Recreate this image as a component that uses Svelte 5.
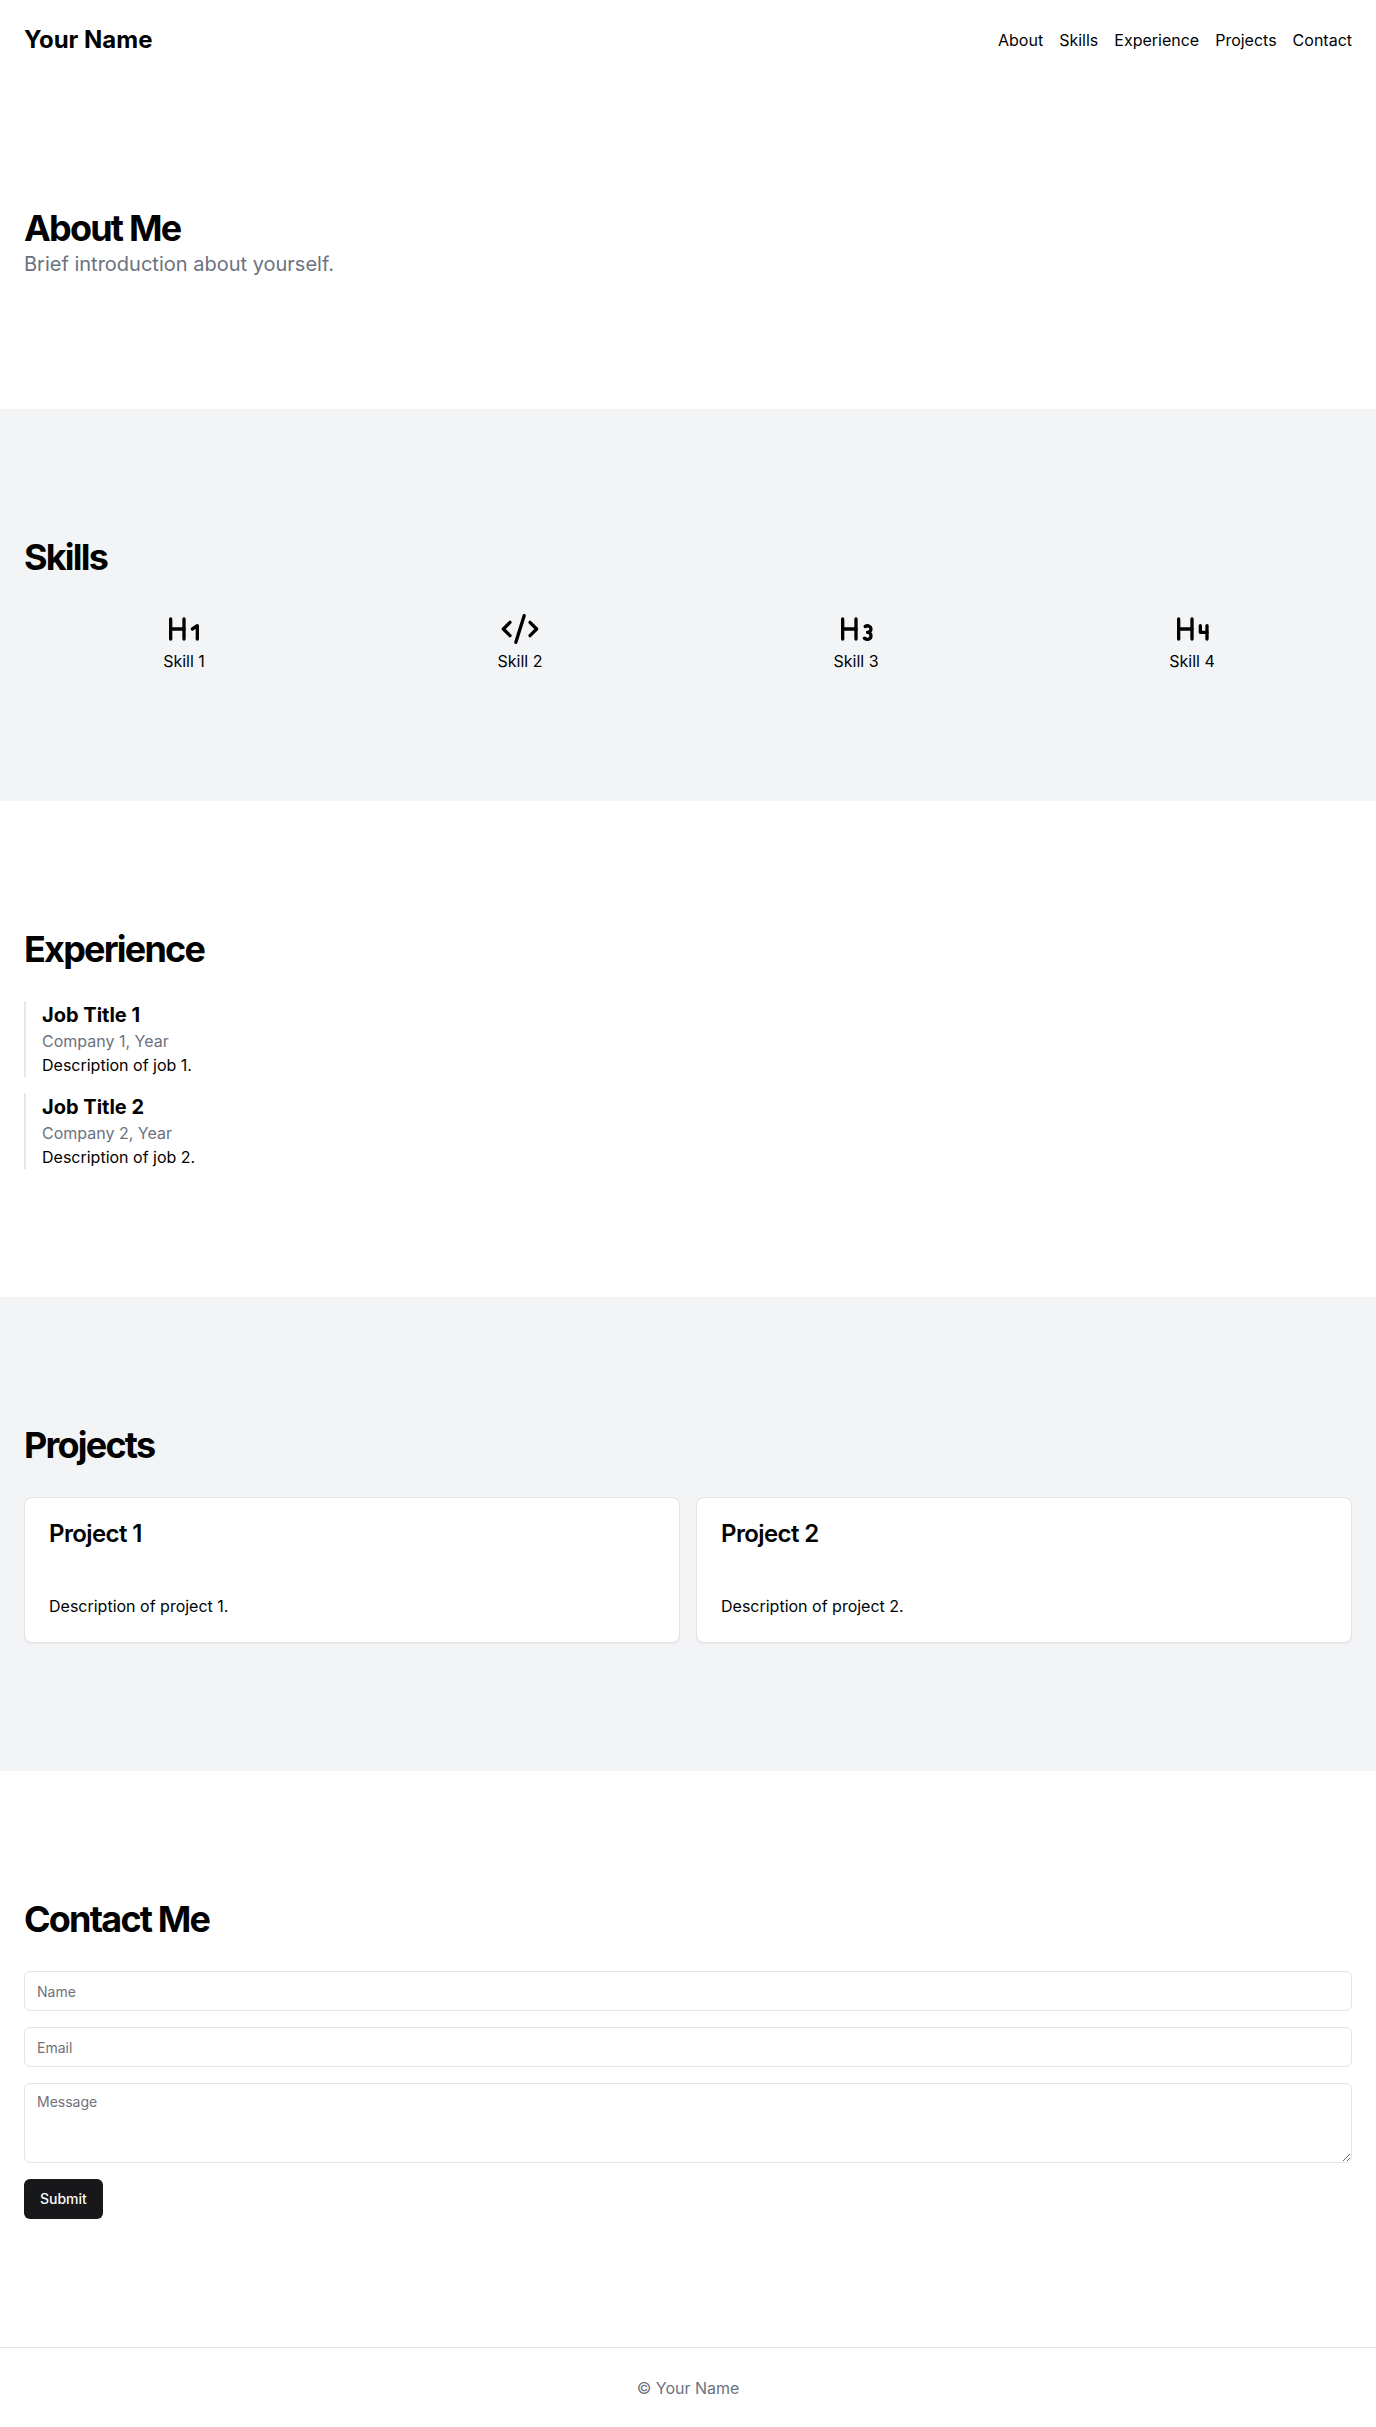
<script>
  const links = ['About', 'Skills', 'Experience', 'Projects', 'Contact'];
  const skills = [
    { name: 'Skill 1', paths: ['M4 12h8', 'M4 18V6', 'M12 18V6', 'm17 12 3-2v8'] },
    { name: 'Skill 2', paths: ['m18 16 4-4-4-4', 'm6 8-4 4 4 4', 'm14.5 4-5 16'] },
    { name: 'Skill 3', paths: ['M4 12h8', 'M4 18V6', 'M12 18V6', 'M17.5 10.5c1.7-1 3.5 0 3.5 1.5a2 2 0 0 1-2 2', 'M17 17.5c2 1.5 4 .3 4-1.5a2 2 0 0 0-2-2'] },
    { name: 'Skill 4', paths: ['M4 12h8', 'M4 18V6', 'M12 18V6', 'M17 10v4h4', 'M21 10v8'] }
  ];
  const jobs = [1, 2];
  const projects = [1, 2];
</script>

<header>
  <h1>Your Name</h1>
  <nav>
    {#each links as link}
      <a href={'#' + link.toLowerCase()}>{link}</a>
    {/each}
  </nav>
</header>
<main>
  <section id="about">
    <h2>About Me</h2>
    <p class="lead">Brief introduction about yourself.</p>
  </section>
  <section id="skills" class="tinted">
    <h2>Skills</h2>
    <div class="skills">
      {#each skills as skill}
        <div class="skill">
          <svg viewBox="0 0 24 24" aria-hidden="true">
            {#each skill.paths as d}<path {d} />{/each}
          </svg>
          <p>{skill.name}</p>
        </div>
      {/each}
    </div>
  </section>
  <section id="experience">
    <h2>Experience</h2>
    <div class="jobs">
      {#each jobs as n}
        <article class="job">
          <h3>Job Title {n}</h3>
          <p class="muted">Company {n}, Year</p>
          <p>Description of job {n}.</p>
        </article>
      {/each}
    </div>
  </section>
  <section id="projects" class="tinted">
    <h2>Projects</h2>
    <div class="projects">
      {#each projects as n}
        <article class="card">
          <h3>Project {n}</h3>
          <p>Description of project {n}.</p>
        </article>
      {/each}
    </div>
  </section>
  <section id="contact">
    <h2>Contact Me</h2>
    <form onsubmit={(e) => e.preventDefault()}>
      <input type="text" placeholder="Name" aria-label="Name" />
      <input type="email" placeholder="Email" aria-label="Email" />
      <textarea placeholder="Message" aria-label="Message"></textarea>
      <button type="submit">Submit</button>
    </form>
  </section>
</main>
<footer><p>© Your Name</p></footer>

<style>
  :global(body) {
    margin: 0;
    background: #fff;
    color: #020203;
    font: 16px/24px Inter, sans-serif;
  }
  :global(*) { box-sizing: border-box; }
  h1, h2, h3, p { margin: 0; }
  header {
    display: flex;
    align-items: center;
    justify-content: space-between;
    padding: 24px;
  }
  h1 { font-size: 24px; line-height: 32px; font-weight: 700; }
  nav { display: flex; gap: 16px; }
  a { color: inherit; text-decoration: none; }
  section { padding: 128px 24px; }
  .tinted { background: #f3f4f6; }
  h2 { font-size: 36px; line-height: 40px; font-weight: 700; letter-spacing: -0.05em; }
  .lead { font-size: 20px; line-height: 33px; color: #6b7280; }
  .skills { display: grid; grid-template-columns: repeat(4, 1fr); gap: 16px; margin-top: 32px; }
  .skill { display: flex; flex-direction: column; align-items: center; }
  svg {
    width: 40px;
    height: 40px;
    fill: none;
    stroke: currentColor;
    stroke-width: 2;
    stroke-linecap: round;
    stroke-linejoin: round;
  }
  .jobs { display: grid; gap: 16px; margin-top: 32px; }
  .job { border-left: 2px solid #e5e7eb; padding-left: 16px; }
  .job h3 { font-size: 20px; line-height: 28px; font-weight: 700; }
  .muted { color: #6b7280; }
  .projects { display: grid; grid-template-columns: repeat(2, 1fr); gap: 16px; margin-top: 32px; }
  .card {
    background: #fff;
    border: 1px solid #e4e4e7;
    border-radius: 8px;
    box-shadow: 0 1px 2px rgba(0, 0, 0, 0.05);
    padding: 24px;
  }
  .card h3 { font-size: 24px; line-height: 24px; font-weight: 600; letter-spacing: -0.025em; margin-bottom: 48px; }
  form { display: grid; gap: 16px; margin-top: 32px; justify-items: start; }
  input, textarea {
    display: block;
    width: 100%;
    margin: 0;
    border: 1px solid #e4e4e7;
    border-radius: 6px;
    background: #fff;
    color: inherit;
    padding: 8px 12px;
    font: 14px/20px Inter, sans-serif;
  }
  input { height: 40px; }
  textarea { height: 80px; }
  input::placeholder, textarea::placeholder { color: #71717a; opacity: 1; }
  button {
    height: 40px;
    border: 0;
    border-radius: 6px;
    background: #18181b;
    color: #fafafa;
    padding: 8px 16px;
    font: 500 14px/20px Inter, sans-serif;
    cursor: pointer;
  }
  footer {
    display: flex;
    align-items: center;
    justify-content: center;
    min-height: 80px;
    border-top: 1px solid #e4e4e7;
    padding: 24px;
    color: #6b7280;
  }
</style>
